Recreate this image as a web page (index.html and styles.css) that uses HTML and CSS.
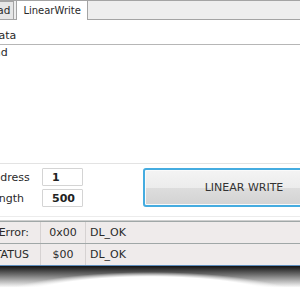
FILE: index.html
```html
<!DOCTYPE html>
<html lang="en">
<head>
    <title>LinearWrite</title>
    <meta name='viewport' content='width=device-width, initial-scale=1'>
    <link rel="stylesheet" href="styles.css">
</head>
<body>
<div class="window">
    <div class="tabs">
        <div class="tab">Read</div>
        <div class="tab active">LinearWrite</div>
    </div>
    <div class="list">
        <div class="list-head">Data</div>
        <div class="list-row">Read</div>
    </div>
    <div class="form">
        <div class="fields">
            <div class="field">
                <label for='address'>Address</label>
                <input type='text' id='address' value='1'>
            </div>
            <div class="field">
                <label for='length'>Length</label>
                <input type='text' id='length' value='500'>
            </div>
        </div>
        <button type='button'>LINEAR WRITE</button>
    </div>
    <div class="status">
        <div class="status-row">
            <span class="name">Last Error:</span>
            <span class="code">0x00</span>
            <span class="text">DL_OK</span>
        </div>
        <div class="status-row">
            <span class="name">STATUS</span>
            <span class="code">$00</span>
            <span class="text">DL_OK</span>
        </div>
    </div>
    <div class="shadow"></div>
</div>
</body>
</html>
```

FILE: styles.css
```css
:root {
    --border: #a4a4a4;
    --strip: #eeeeee;
    --text: #2a2a2a;
    --status-bg: #efebeb;
    --row-line: #a0a7a7;
    --cell-line: #d6d2d2;
    --accent: #45ace0;
}

html, body {
    margin: 0;
    overflow: hidden;
    background: #fff;
}

body {
    font-family: "DejaVu Sans", Verdana, sans-serif;
    font-size: 11px;
    color: var(--text);
}

.window {
    margin-left: -30px;
    width: 400px;
}

/* tab strip */
.tabs {
    display: flex;
    align-items: flex-start;
    height: 20px;
    box-sizing: border-box;
    padding-left: 10px;
    background: var(--strip);
    border-top: 1px solid var(--border);
    border-bottom: 1px solid var(--border);
}

.tab {
    height: 18px;
    box-sizing: border-box;
    line-height: 17px;
    padding: 0 3px;
    font-size: 10.5px;
    background: #e6e6e6;
    border: 1px solid var(--border);
    border-bottom: none;
}

.tab.active {
    height: 20px;
    line-height: 19px;
    margin: -1px 0 -1px 2px;
    padding: 0 6px;
    font-size: 10px;
    background: #fff;
}

/* list */
.list {
    height: 143px;
    box-sizing: border-box;
    padding-top: 8px;
}

.list-head {
    height: 16px;
    line-height: 16px;
    padding-left: 20px;
    border-bottom: 1px solid #b6b6b6;
}

.list-row {
    height: 16px;
    line-height: 16px;
    padding-left: 10px;
}

/* address / length form */
.form {
    display: flex;
    align-items: flex-start;
    padding: 4px 0 9px;
    border-top: 1px solid #e3e3e3;
    border-bottom: 1px solid #ececec;
}

.fields {
    padding-left: 16px;
}

.field {
    display: flex;
    align-items: center;
    height: 18px;
}

.field + .field {
    margin-top: 3px;
}

label {
    width: 56px;
}

input {
    width: 41px;
    height: 18px;
    box-sizing: border-box;
    margin: 0;
    padding: 0 0 0 9px;
    border: 1px solid #d4d4d4;
    border-radius: 1px;
    font-family: inherit;
    font-size: 11px;
    font-weight: bold;
    color: #222;
    background: #fff;
}

button {
    width: 202px;
    height: 39px;
    margin-left: 60px;
    border: 2px solid var(--accent);
    border-radius: 3px;
    box-shadow: inset 0 0 0 1px #fafafa;
    background: linear-gradient(#f4f4f4, #ececec 50%, #dddddd 50%, #d3d3d3);
    font-family: inherit;
    font-size: 11px;
    color: #333;
}

/* status table */
.status {
    margin-top: 3px;
    border-top: 1px solid #cfcfcf;
    border-bottom: 1px solid #5d8dbd;
    box-shadow: 0 1px 0 #b4cbe0;
}

.status-row {
    display: grid;
    grid-template-columns: 71px 45px 1fr;
    height: 21px;
    line-height: 21px;
    background: var(--status-bg);
    border-top: 1px solid var(--row-line);
}

.status-row .name {
    text-align: right;
    padding-right: 11px;
    border-right: 1px solid var(--cell-line);
}

.status-row .code {
    text-align: center;
    border-right: 1px solid var(--cell-line);
}

.status-row .text {
    padding-left: 4px;
}

.shadow {
    margin-left: 30px;
    width: 300px;
    height: 24px;
    background:
        radial-gradient(ellipse 165px 34px at 50% 40px, #fff 86%, rgba(255, 255, 255, 0) 100%),
        linear-gradient(to bottom, rgba(20, 20, 20, 1), rgba(70, 70, 70, 0.8) 35%, rgba(255, 255, 255, 0) 90%);
}
```
